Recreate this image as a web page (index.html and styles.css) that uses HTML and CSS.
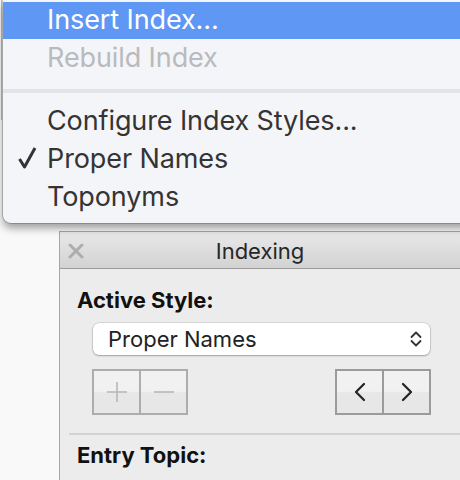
FILE: index.html
```html
<!DOCTYPE html>
<html>
<head>
<meta charset="utf-8">
<link rel="stylesheet" href="styles.css">
</head>
<body>
<div class="screen">
  <div class="edge"></div>

  <div class="panel">
    <div class="titlebar">
      <svg class="close" width="16" height="16" viewBox="0 0 16 16"><path d="M2 2 L14 14 M14 2 L2 14" stroke="#adadad" stroke-width="3" stroke-linecap="round"/></svg>
      <span class="title">Indexing</span>
    </div>
    <div class="panel-body">
      <div class="label">Active Style:</div>
      <div class="select">
        <span>Proper Names</span>
        <svg class="updown" width="14" height="20" viewBox="0 0 14 20"><path d="M2.5 8 L7 3.5 L11.5 8 M2.5 12 L7 16.5 L11.5 12" fill="none" stroke="#333" stroke-width="1.8" stroke-linecap="round" stroke-linejoin="round"/></svg>
      </div>
      <div class="btnrow">
        <div class="seg seg-off">
          <div class="segbtn"><svg width="22" height="22" viewBox="0 0 22 22"><path d="M11 1 V21 M1 11 H21" stroke="#b7b7b7" stroke-width="1.6"/></svg></div>
          <div class="segbtn"><svg width="22" height="22" viewBox="0 0 22 22"><path d="M1 11 H21" stroke="#b7b7b7" stroke-width="1.6"/></svg></div>
        </div>
        <div class="seg seg-on">
          <div class="segbtn"><svg width="14" height="20" viewBox="0 0 14 20"><path d="M11 2 L3 10 L11 18" fill="none" stroke="#222" stroke-width="2.2" stroke-linecap="round" stroke-linejoin="round"/></svg></div>
          <div class="segbtn"><svg width="14" height="20" viewBox="0 0 14 20"><path d="M3 2 L11 10 L3 18" fill="none" stroke="#222" stroke-width="2.2" stroke-linecap="round" stroke-linejoin="round"/></svg></div>
        </div>
      </div>
      <div class="rule"></div>
      <div class="label">Entry Topic:</div>
    </div>
  </div>

  <div class="menu">
    <div class="item active">Insert Index...</div>
    <div class="item disabled">Rebuild Index</div>
    <div class="sep"></div>
    <div class="item">Configure Index Styles...</div>
    <div class="item"><svg class="check" width="22" height="24" viewBox="0 0 22 24"><path d="M3.5 13 L8.5 21 L19 2" fill="none" stroke="#333" stroke-width="3" stroke-linejoin="round"/></svg>Proper Names</div>
    <div class="item">Toponyms</div>
  </div>
</div>
</body>
</html>
```

FILE: styles.css
```css
html, body {
  margin: 0;
  padding: 0;
}
body {
  font-family: Inter, "Open Sans", "Liberation Sans", sans-serif;
  color: #333;
}
.screen {
  position: relative;
  width: 460px;
  height: 480px;
  overflow: hidden;
  background: #f9f9f9;
}
.edge {
  position: absolute;
  left: 1px;
  top: 0;
  width: 1px;
  height: 120px;
  background: #b9b9b9;
}

/* menu */
.menu {
  position: absolute;
  left: 3px;
  top: 0;
  width: 480px;
  padding: 2px 0 7px;
  background: #f4f5f8;
  border-radius: 0 0 8px 8px;
  box-shadow: 0 0 0 1px rgba(0,0,0,0.18), 0 5px 8px rgba(0,0,0,0.38);
  z-index: 2;
}
.item {
  position: relative;
  height: 38px;
  line-height: 38px;
  padding-left: 44px;
  font-size: 27px;
  color: #343434;
  letter-spacing: -0.1px;
}
.item.active {
  height: 37px;
  line-height: 36px;
  background: #5f97f5;
  color: #fff;
}
.item.disabled {
  color: #b9babd;
}
.sep {
  height: 25px;
  display: flex;
  align-items: center;
  padding-top: 2px;
  box-sizing: border-box;
}
.sep::before {
  content: "";
  display: block;
  width: 100%;
  height: 4px;
  background: #e3e4e7;
}
.check {
  position: absolute;
  left: 13px;
  top: 6px;
}

/* panel */
.panel {
  position: absolute;
  left: 59px;
  top: 231px;
  width: 420px;
  height: 270px;
  border: 1px solid #a6a6a6;
  background: #ececec;
  z-index: 1;
}
.titlebar {
  position: relative;
  height: 36px;
  border-bottom: 1px solid #9c9c9c;
  background: linear-gradient(#e9e9e9, #d2d2d2);
  display: flex;
  align-items: center;
}
.close {
  position: absolute;
  left: 8px;
  top: 11px;
}
.title {
  width: 400px;
  text-align: center;
  font-size: 22px;
  color: #262626;
  padding-top: 1px;
}
.panel-body {
  display: flex;
  flex-direction: column;
  padding: 17px 0 0 17px;
}
.label {
  font-size: 22px;
  font-weight: 700;
  color: #111;
  line-height: 28px;
}
.select {
  margin: 9px 0 0 16px;
  width: 337px;
  height: 32px;
  box-sizing: border-box;
  background: #fff;
  border-radius: 6px;
  box-shadow: 0 0 0 0.5px rgba(0,0,0,0.18), 0 1px 2px rgba(0,0,0,0.25);
  display: flex;
  align-items: center;
  justify-content: space-between;
  padding: 0 7px 0 15px;
  font-size: 22px;
  color: #222;
}
.updown {
  display: block;
}
.btnrow {
  display: flex;
  justify-content: space-between;
  margin: 14px 0 0 15px;
  width: 339px;
}
.seg {
  display: flex;
  height: 46px;
  box-sizing: border-box;
  border: 2px solid #adadad;
  background: linear-gradient(#f1f1f1 0, #f1f1f1 48%, #e7e7e7 52%, #e7e7e7 100%);
}
.seg-on {
  border-color: #9b9b9b;
}
.segbtn {
  width: 45px;
  display: flex;
  align-items: center;
  justify-content: center;
}
.segbtn + .segbtn {
  border-left: 2px solid #adadad;
}
.seg-on .segbtn + .segbtn {
  border-left-color: #9b9b9b;
}
.rule {
  margin: 18px 0 0 -8px;
  height: 2px;
  background: #d3d3d3;
}
.panel-body .rule + .label {
  margin-top: 6px;
}
```
